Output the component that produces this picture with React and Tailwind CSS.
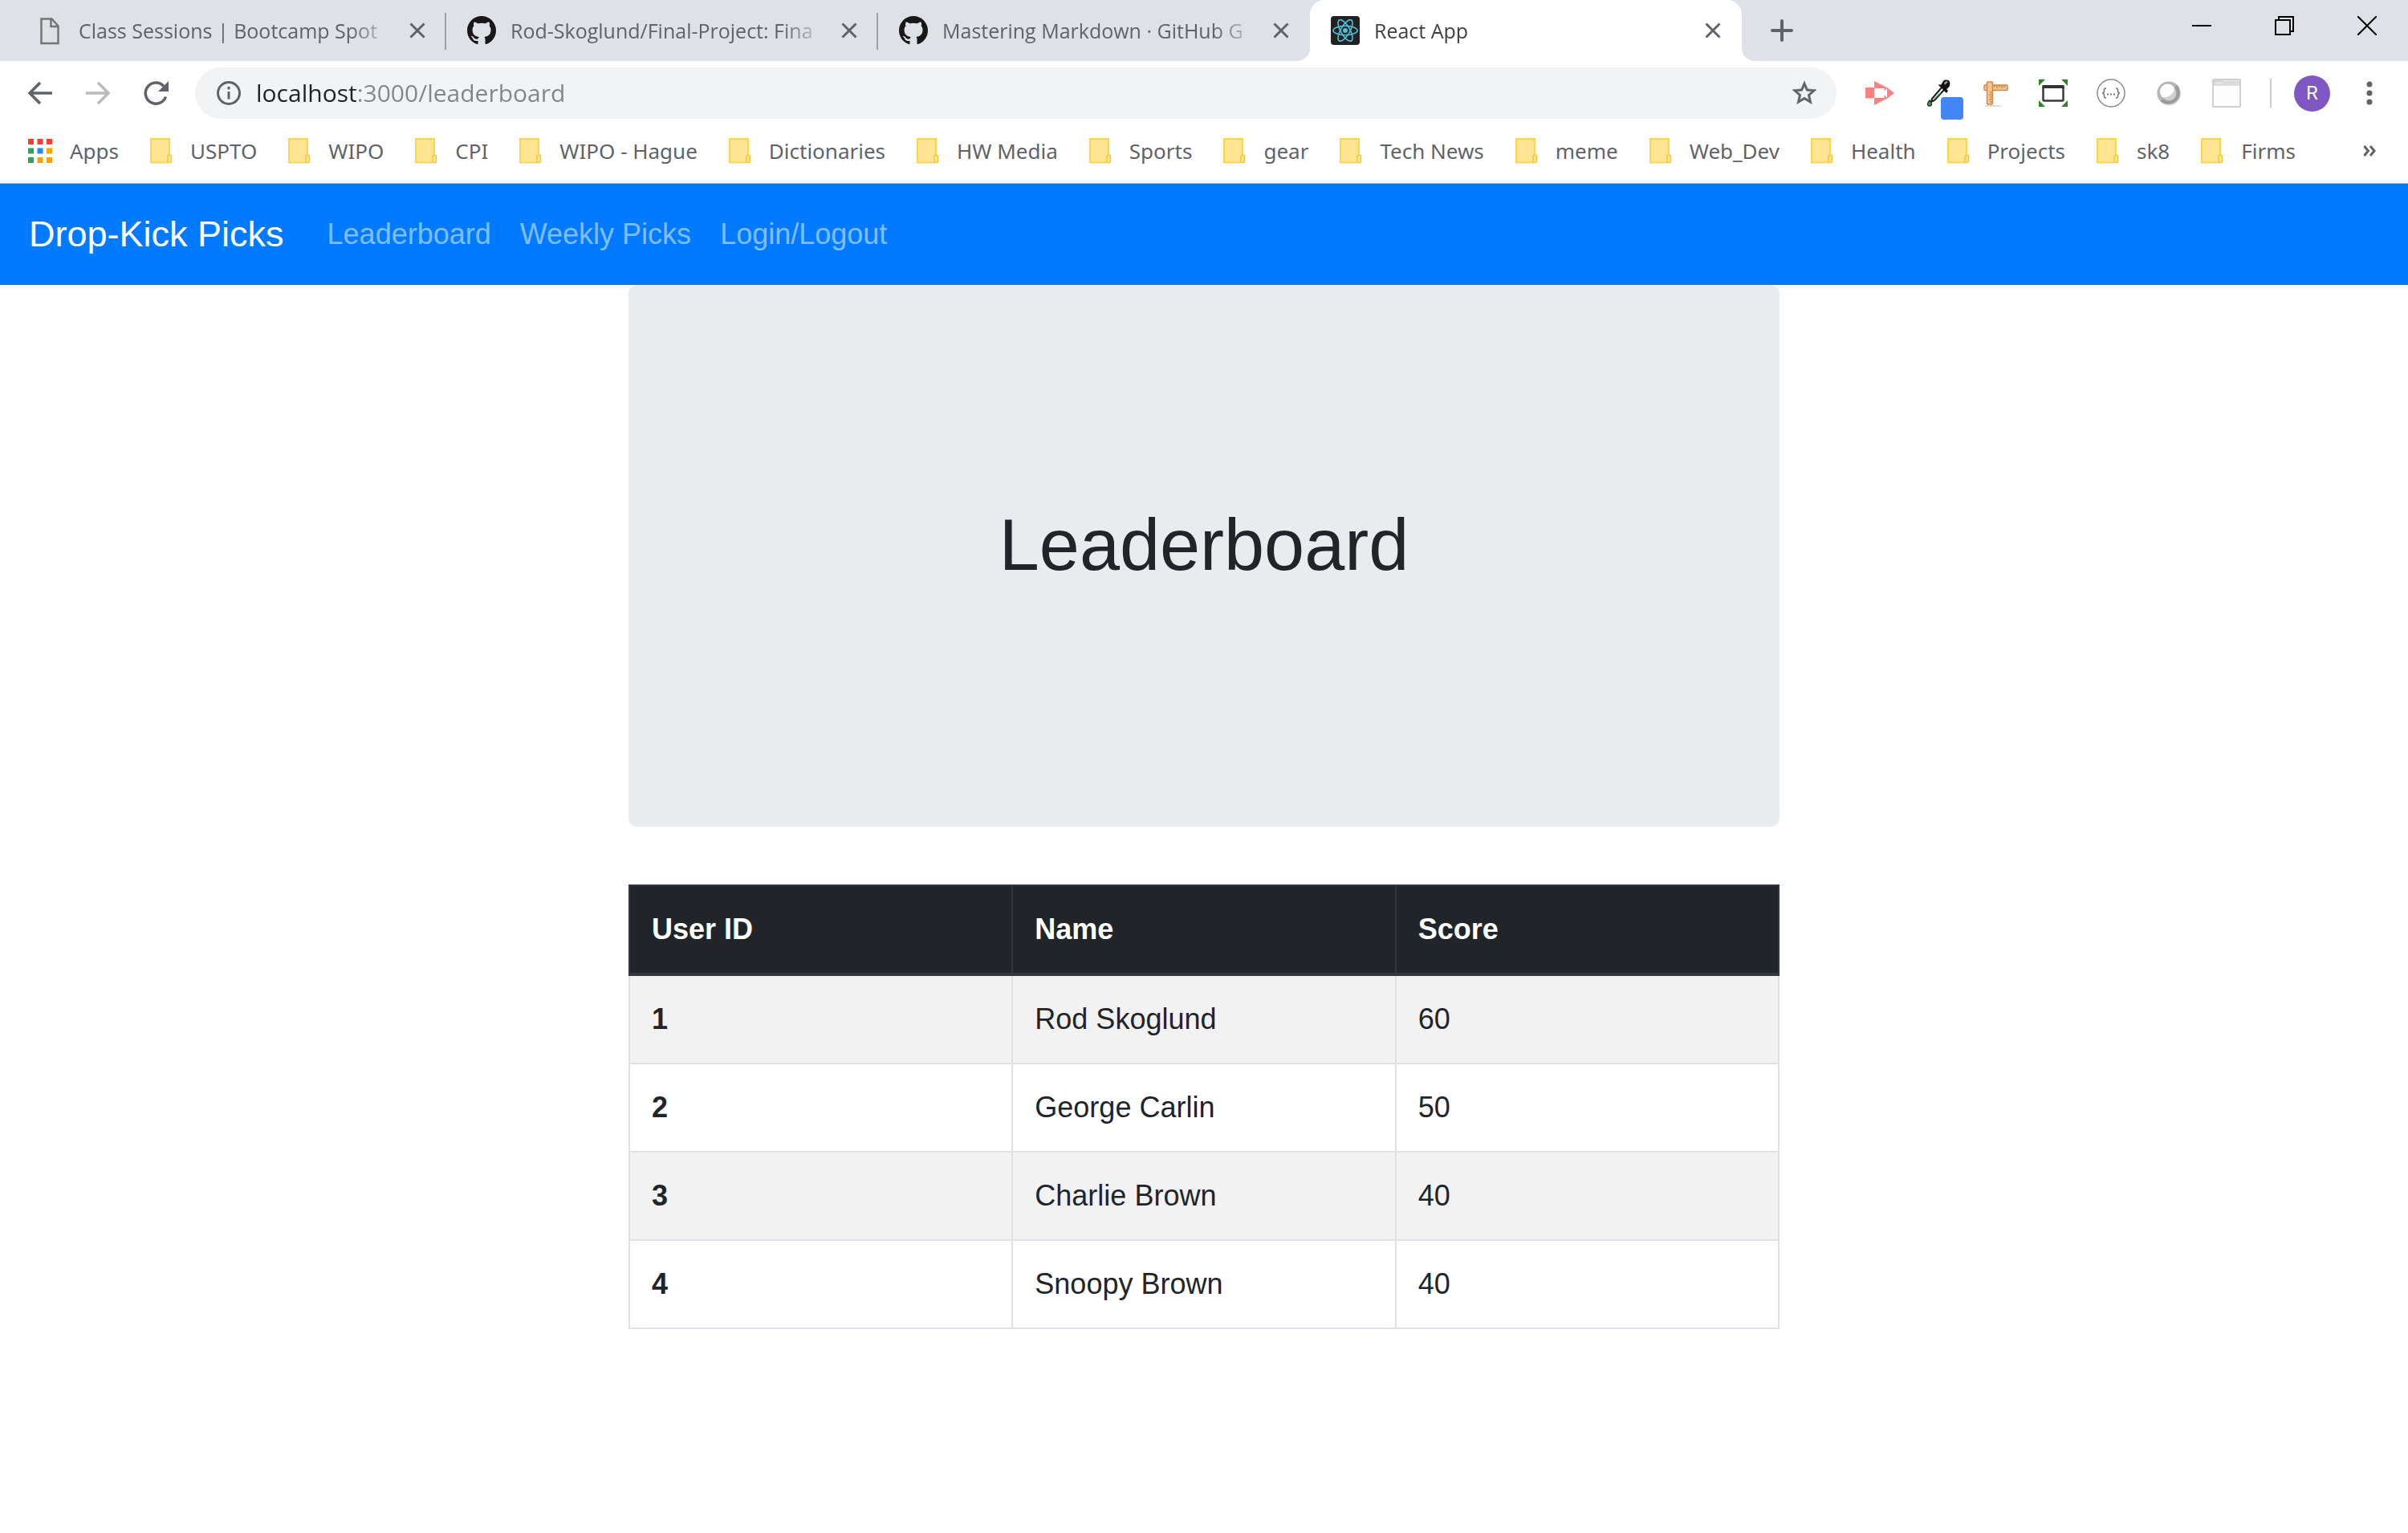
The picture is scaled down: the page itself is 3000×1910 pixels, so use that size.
const folders = [
  "USPTO", "WIPO", "CPI", "WIPO - Hague", "Dictionaries", "HW Media", "Sports", "gear",
  "Tech News", "meme", "Web_Dev", "Health", "Projects", "sk8", "Firms",
];

const players = [
  { id: 1, name: "Rod Skoglund", score: 60 },
  { id: 2, name: "George Carlin", score: 50 },
  { id: 3, name: "Charlie Brown", score: 40 },
  { id: 4, name: "Snoopy Brown", score: 40 },
];

/* ---------- Favicons ---------- */

function PageIcon() {
  return (
    <svg viewBox="0 0 36 36" className="size-9 shrink-0" fill="none" stroke="#757575" strokeWidth="2.5">
      <path d="M7.5 3.5h13l8 9v21.500h-21z" />
      <path d="M19.500 3.500v9.500h9" />
    </svg>
  );
}

function GithubIcon() {
  return (
    <svg viewBox="0 0 16 16" className="size-9 shrink-0" fill="#191717">
      <path d="M8 0C3.58 0 0 3.58 0 8c0 3.54 2.29 6.53 5.47 7.59.4.07.55-.17.55-.38 0-.19-.01-.82-.01-1.49-2.01.37-2.53-.49-2.69-.94-.09-.23-.48-.94-.82-1.13-.28-.15-.68-.52-.01-.53.63-.01 1.08.58 1.23.82.72 1.21 1.87.87 2.33.66.07-.52.28-.87.51-1.07-1.78-.2-3.64-.89-3.64-3.95 0-.87.31-1.59.82-2.15-.08-.2-.36-1.02.08-2.12 0 0 .67-.21 2.2.82.64-.18 1.32-.27 2-.27.68 0 1.36.09 2 .27 1.53-1.04 2.2-.82 2.2-.82.44 1.1.16 1.92.08 2.12.51.56.82 1.27.82 2.15 0 3.07-1.87 3.75-3.65 3.95.29.25.54.73.54 1.48 0 1.07-.01 1.93-.01 2.2 0 .21.15.46.55.38A8.013 8.013 0 0016 8c0-4.420-3.580-8-8-8z" />
    </svg>
  );
}

function ReactIcon() {
  return (
    <svg viewBox="0 0 36 36" className="size-9 shrink-0">
      <rect width="36" height="36" rx="4" fill="#222" />
      <g fill="none" stroke="#53c1de" strokeWidth="1.600">
        <ellipse cx="18" cy="18" rx="15" ry="5.700" />
        <ellipse cx="18" cy="18" rx="15" ry="5.700" transform="rotate(60 18 18)" />
        <ellipse cx="18" cy="18" rx="15" ry="5.700" transform="rotate(120 18 18)" />
      </g>
      <circle cx="18" cy="18" r="2.900" fill="#53c1de" />
    </svg>
  );
}

/* ---------- Tab strip ---------- */

function CloseGlyph() {
  return (
    <svg viewBox="0 0 20 20" className="size-5" stroke="#5f6368" strokeWidth="3" fill="none">
      <path d="M1.500 1.500l17 17M18.500 1.500l-17 17" />
    </svg>
  );
}

function Tab({ icon, title, active, divider }) {
  return (
    <div
      className={
        "relative flex h-full min-w-0 max-w-[538px] flex-1 items-center px-[26px] " +
        (active ? "rounded-t-[18px] bg-white" : "")
      }
    >
      {active && (
        <>
          <svg viewBox="0 0 16 16" className="absolute -left-4 bottom-0 size-4" fill="#fff">
            <path d="M16 0v16H0A16 16 0 0 0 16 0z" />
          </svg>
          <svg viewBox="0 0 16 16" className="absolute -right-4 bottom-0 size-4" fill="#fff">
            <path d="M0 0v16h16A16 16 0 0 1 0 0z" />
          </svg>
        </>
      )}
      {icon}
      <button
        type="button"
        className={
          "mx-[18px] min-w-0 flex-1 overflow-hidden text-left text-[25px] leading-9 whitespace-nowrap [mask-image:linear-gradient(to_right,#000_calc(100%-56px),transparent)] " +
          (active ? "text-[#3c4043]" : "text-[#5f6368]")
        }
      >
        {title}
      </button>
      <button type="button" aria-label="Close tab" className="shrink-0">
        <CloseGlyph />
      </button>
      {divider && <span className="absolute top-4 right-0 h-[46px] w-0.5 bg-[#9da1a6]" />}
    </div>
  );
}

function TabStrip() {
  return (
    <div className="flex h-[76px] items-center bg-[#dee1e6] pl-[18px]">
      <Tab icon={<PageIcon />} title="Class Sessions | Bootcamp Spot" divider />
      <Tab icon={<GithubIcon />} title="Rod-Skoglund/Final-Project: Fina" divider />
      <Tab icon={<GithubIcon />} title="Mastering Markdown · GitHub G" />
      <Tab icon={<ReactIcon />} title="React App" active />
      <button type="button" aria-label="New tab" className="ml-9 shrink-0">
        <svg viewBox="0 0 28 28" className="size-7" stroke="#5f6368" strokeWidth="4" strokeLinecap="round">
          <path d="M14 2v24M2 14h24" />
        </svg>
      </button>
      <div className="ml-auto flex shrink-0 self-start">
        <button type="button" aria-label="Minimize" className="flex h-16 w-[103px] items-center justify-center">
          <svg viewBox="0 0 24 24" className="size-6" stroke="#000" strokeWidth="2">
            <path d="M0 12h24" />
          </svg>
        </button>
        <button type="button" aria-label="Restore" className="flex h-16 w-[103px] items-center justify-center">
          <svg viewBox="0 0 24 24" className="size-6" stroke="#000" strokeWidth="2" fill="none">
            <path d="M1 5h18v18H1zM5 5V1h18v18h-4" />
          </svg>
        </button>
        <button type="button" aria-label="Close window" className="flex h-16 w-[103px] items-center justify-center">
          <svg viewBox="0 0 24 24" className="size-6" stroke="#000" strokeWidth="2">
            <path d="M0 0l24 24M24 0L0 24" />
          </svg>
        </button>
      </div>
    </div>
  );
}

/* ---------- Toolbar ---------- */

function NavButton({ label, children }) {
  return (
    <button type="button" aria-label={label} className="size-9 shrink-0">
      <svg viewBox="0 0 36 36" className="size-9" fill="none">
        {children}
      </svg>
    </button>
  );
}

function Toolbar() {
  return (
    <div className="flex h-20 items-center gap-9 pr-[30px] pl-8">
      <NavButton label="Back">
        <path d="M33 18H6M18 5L5 18l13 13" stroke="#5f6368" strokeWidth="3.500" />
      </NavButton>
      <NavButton label="Forward">
        <path d="M3 18h27M18 5l13 13-13 13" stroke="#bababa" strokeWidth="3.500" />
      </NavButton>
      <NavButton label="Reload">
        <path d="M30.500 22.500A13 13 0 1 1 28 9.500" stroke="#5f6368" strokeWidth="3.500" />
        <path d="M34 3v13H21z" fill="#5f6368" />
      </NavButton>

      <div className="-ml-[5px] flex h-16 min-w-0 flex-1 items-center rounded-full bg-[#f1f3f4] pr-6 pl-[26px]">
        <svg viewBox="0 0 32 32" className="size-8 shrink-0" fill="none" stroke="#5f6368" strokeWidth="3">
          <circle cx="16" cy="16" r="13.500" />
          <path d="M16 14v9.500M16 8v3.500" />
        </svg>
        <input
          type="text"
          aria-label="Address"
          defaultValue="localhost:3000/leaderboard"
          className="ml-[18px] min-w-0 flex-1 bg-[linear-gradient(to_right,#202124_125px,#80868b_125px)] bg-clip-text text-[30px] leading-10 text-transparent caret-black outline-none"
        />
        <button type="button" aria-label="Bookmark this page" className="shrink-0">
          <svg viewBox="0 0 24 24" className="size-9 -m-0.5" fill="#5f6368" stroke="#5f6368" strokeWidth="0.4">
            <path d="M22 9.240l-7.190-.62L12 2 9.190 8.630 2 9.240l5.460 4.730L5.820 21 12 17.270 18.180 21l-1.630-7.030L22 9.240zM12 15.400l-3.760 2.270 1-4.280-3.320-2.880 4.380-.38L12 6.100l1.710 4.040 4.380.38-3.320 2.880 1 4.280L12 15.400z" />
          </svg>
        </button>
      </div>

      <NavButton label="Screen recorder">
        <g fill="#ff8080">
          <path d="M0 11h11v13.500H0z" />
          <path d="M11 3l16.500 8.500-4 4V12H11z" />
          <path d="M11 33V24h12.500v-4l4 4.500z" />
          <path d="M27 11l9 7-9 7z" />
        </g>
      </NavButton>
      <div className="relative size-9 shrink-0">
        <NavButton label="Color picker">
          <path d="M23 11L11 25l-1 4 4-2 12-13" fill="#fff" stroke="#1a1a1a" strokeWidth="2" />
          <path d="M20 18l-8 9 2-1 9-9z" fill="#34a853" />
          <path d="M19 8l10 10 2-3-2-2c4-2 5-6 4-9s-6-3-8-1l-3 5-2-1z" fill="#111" />
          <path d="M26 5l3-2 2 1-4 4z" fill="#999" />
          <path d="M8 27c-3 3-3.500 7 0 7s3-4 0-7z" fill="#34a853" stroke="#333" strokeWidth="1.500" />
        </NavButton>
        <span className="absolute top-[23px] left-[22px] size-7 rounded bg-[#4285f4]" />
      </div>
      <NavButton label="Page ruler">
        <path d="M5 34h20" stroke="#ddd" strokeWidth="2" />
        <rect x="4" y="8" width="29" height="6.500" rx="1" fill="#f6c48e" stroke="#cf8a4a" strokeWidth="1.500" />
        <rect x="7.500" y="4" width="7" height="28" rx="1" fill="#f6c48e" stroke="#cf8a4a" strokeWidth="1.500" />
        <path d="M17 8v3M20 8v4M23 8v3M26 8v4M29 8v3M14 17h-3M14 20h-4M14 23h-3M14 26h-4M14 29h-3" stroke="#b87535" strokeWidth="1" />
      </NavButton>
      <NavButton label="Window resizer">
        <path d="M0 1h8L0 9zM36 1v8l-8-8zM0 35v-8l8 8zM36 35h-8l8-8z" fill="#2e8526" />
        <rect x="5.500" y="9.500" width="25" height="18" rx="1" fill="#fff" stroke="#3a3a3a" strokeWidth="2.500" />
        <path d="M4.500 8h27v4h-27z" fill="#333" />
      </NavButton>
      <NavButton label="JSON viewer">
        <circle cx="18" cy="18" r="17" stroke="#8c8c8c" strokeWidth="1.500" />
        <path d="M12 12c-3 0-2.500 1.500-2.500 3s0 3-2.500 3c2.500 0 2.500 1.500 2.500 3s-.500 3 2.500 3M24 12c3 0 2.500 1.500 2.500 3s0 3 2.500 3c-2.500 0-2.500 1.500-2.500 3s.500 3-2.500 3" stroke="#777" strokeWidth="1.500" />
        <path d="M13 19.500h2M17 19.500h2M21 19.500h2" stroke="#777" strokeWidth="2" />
      </NavButton>
      <NavButton label="Lens">
        <circle cx="18" cy="19" r="15.500" fill="#f3f3f3" />
        <circle cx="18" cy="18" r="14.500" fill="#b5b5b5" />
        <path d="M28.200 7.800A14.500 14.500 0 0 1 7.800 28.200z" fill="#9b9b9b" />
        <circle cx="18" cy="18" r="9.500" fill="#d0d0d0" />
        <path d="M23.500 9.500c4 5-4 16-14 13A9.500 9.500 0 0 1 23.500 9.500z" fill="#fff" />
      </NavButton>
      <NavButton label="Window">
        <rect x="1" y="1" width="34" height="34" rx="1" fill="#fdfdfd" stroke="#d0d0d0" strokeWidth="2" />
        <path d="M2 2h32v5H2z" fill="#e4e4e4" />
        <path d="M3 7V3h9l2 2h20M2 8h32" stroke="#d0d0d0" strokeWidth="1.500" />
      </NavButton>

      <div className="flex shrink-0 items-center">
        <span className="h-9 w-0.5 bg-[#cbcdd0]" />
        <button
          type="button"
          aria-label="Profile"
          className="ml-7 flex size-[45px] items-center justify-center rounded-full bg-[#7e57c2] font-['Roboto',sans-serif] text-[24px] text-white"
        >
          R
        </button>
        <button type="button" aria-label="Menu" className="ml-[31px]">
          <svg viewBox="0 0 36 36" className="size-9" fill="#5f6368">
            <circle cx="18" cy="7" r="3.500" />
            <circle cx="18" cy="18" r="3.500" />
            <circle cx="18" cy="29" r="3.500" />
          </svg>
        </button>
      </div>
    </div>
  );
}

/* ---------- Bookmarks bar ---------- */

function AppsIcon() {
  const colors = ["#fa3c35", "#fa3c35", "#fa3c35", "#2fa35b", "#1e8cf7", "#f5a400", "#2fa35b", "#f5a400", "#f5a400"];
  return (
    <svg viewBox="0 0 30 30" className="size-[30px]">
      {colors.map((c, i) => (
        <rect key={i} x={(i % 3) * 11.5} y={Math.floor(i / 3) * 11.5} width="7" height="7" fill={c} />
      ))}
    </svg>
  );
}

function FolderIcon() {
  return (
    <svg viewBox="0 0 28 32" className="h-8 w-7" fill="#ffe591" stroke="#fad54d" strokeWidth="2">
      <path d="M1 1h23v20h3v9.500H1z" stroke="none" />
      <path d="M24 21V1H1v29.500h21" />
      <rect x="22" y="21.5" width="4.500" height="9" rx="1" stroke="#f0c93f" strokeWidth="1.500" />
    </svg>
  );
}

function BookmarksBar() {
  return (
    <nav
      aria-label="Bookmarks"
      className="flex h-[73px] items-center gap-[39px] border-b border-[#b3b3b3] pr-10 pb-2 pl-[35px] font-['Noto_Sans',sans-serif] text-[26px] leading-9 text-[#5f6368]"
    >
      <a href="#apps" className="flex shrink-0 items-center gap-[22px]">
        <AppsIcon />
        Apps
      </a>
      {folders.map((name) => (
        <button key={name} type="button" className="flex shrink-0 items-center gap-[22px] whitespace-nowrap">
          <FolderIcon />
          {name}
        </button>
      ))}
      <button type="button" aria-label="More bookmarks" className="ml-auto shrink-0">
        <svg viewBox="0 0 16 16" className="size-4" fill="none" stroke="#5f6368" strokeWidth="3">
          <path d="M1.500 2l5 6-5 6M9 2l5 6-5 6" />
        </svg>
      </button>
    </nav>
  );
}

/* ---------- Page ---------- */

function SiteNav() {
  return (
    <nav className="flex items-center bg-[#007bff] px-9 py-[18px] text-[36px] leading-[54px]">
      <a href="#home" className="mr-9 text-[45px] text-white">
        Drop-Kick Picks
      </a>
      {["Leaderboard", "Weekly Picks", "Login/Logout"].map((label) => (
        <a key={label} href={"#" + label} className="px-[18px] py-[18px] text-white/50">
          {label}
        </a>
      ))}
    </nav>
  );
}

function LeaderboardTable() {
  return (
    <table className="mt-[72px] w-full table-fixed border-collapse text-left text-[36px] leading-[54px] text-[#212529]">
      <thead className="bg-[#212529] text-white">
        <tr>
          {["User ID", "Name", "Score"].map((h) => (
            <th key={h} scope="col" className="border-2 border-b-4 border-[#32383e] p-[27px] font-bold">
              {h}
            </th>
          ))}
        </tr>
      </thead>
      <tbody>
        {players.map((p) => (
          <tr key={p.id} className="odd:bg-[#f2f2f2]">
            <th scope="row" className="border-2 border-[#dee2e6] p-[27px] font-bold">{p.id}</th>
            <td className="border-2 border-[#dee2e6] p-[27px]">{p.name}</td>
            <td className="border-2 border-[#dee2e6] p-[27px]">{p.score}</td>
          </tr>
        ))}
      </tbody>
    </table>
  );
}

export default function App() {
  return (
    <div className="min-h-screen bg-white font-['Open_Sans',sans-serif]">
      <header>
        <TabStrip />
        <Toolbar />
        <BookmarksBar />
      </header>
      <div className="font-['Liberation_Sans',Arial,sans-serif]">
        <SiteNav />
        <main className="mx-auto max-w-[1434px]">
          <div className="flex min-h-[675px] items-center justify-center rounded-[10px] bg-[#e9ecef] pb-7">
            <h1 className="text-[90px] leading-[108px] text-[#212529]">Leaderboard</h1>
          </div>
          <LeaderboardTable />
        </main>
      </div>
    </div>
  );
}
